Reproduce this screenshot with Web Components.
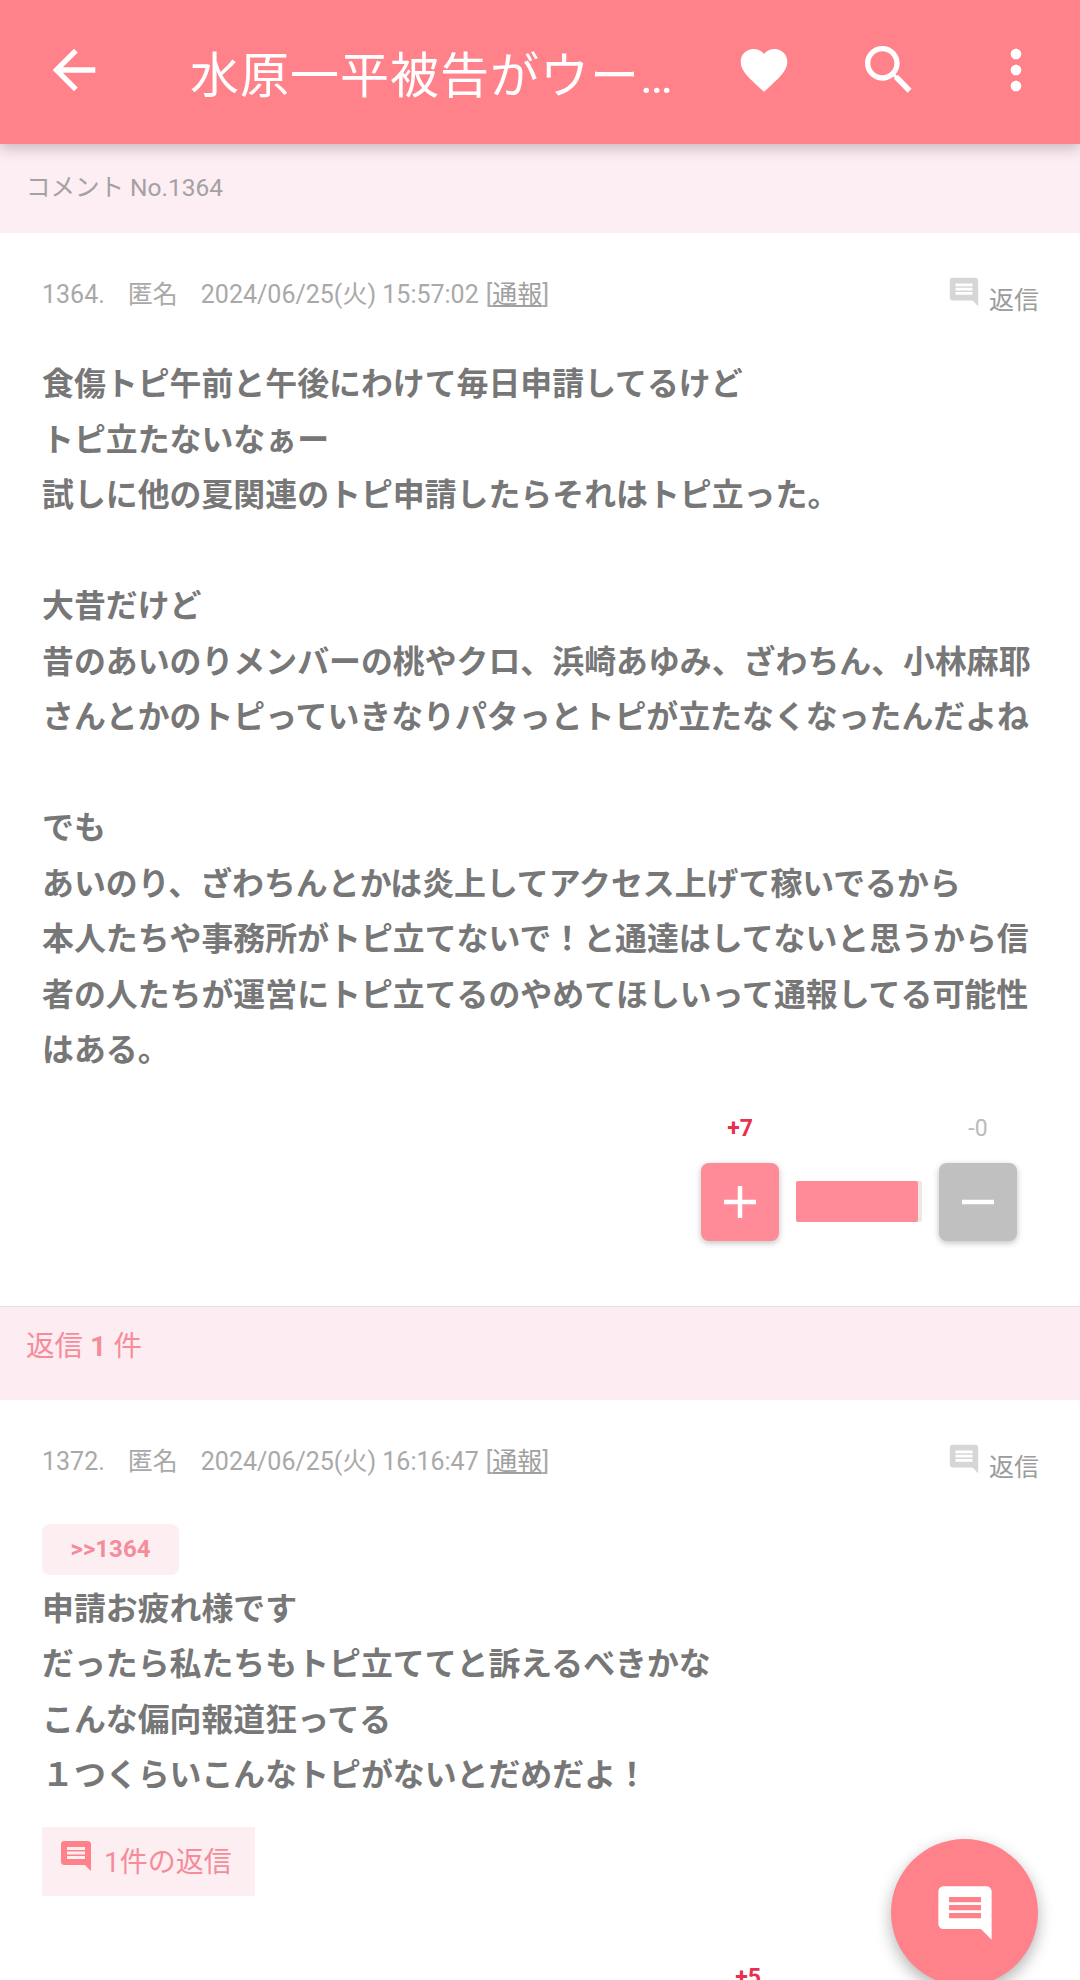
<!DOCTYPE html>
<html lang="ja">
<head>
<meta charset="utf-8">
<title>コメント</title>
<style>
  html, body { margin: 0; height: 1980px; overflow: hidden; background: #fff; }
  body { font-family: Roboto, "Noto Sans CJK JP", sans-serif; position: relative; }
</style>
</head>
<body>
<app-bar title-text="水原一平被告がウー…"></app-bar>
<section-band>コメント No.1364</section-band>
<comment-card num="1364." date="2024/06/25(火) 15:57:02" plus="+7" minus="-0">食傷トピ午前と午後にわけて毎日申請してるけど
トピ立たないなぁー
試しに他の夏関連のトピ申請したらそれはトピ立った。

大昔だけど
昔のあいのりメンバーの桃やクロ、浜崎あゆみ、ざわちん、小林麻耶
さんとかのトピっていきなりパタっとトピが立たなくなったんだよね

でも
あいのり、ざわちんとかは炎上してアクセス上げて稼いでるから
本人たちや事務所がトピ立てないで！と通達はしてないと思うから信
者の人たちが運営にトピ立てるのやめてほしいって通報してる可能性
はある。</comment-card>
<section-band tone="reply">返信 <b>1</b> 件</section-band>
<comment-card num="1372." date="2024/06/25(火) 16:16:47" anchor="&gt;&gt;1364" replies="1件の返信" plus="+5" minus="-0">申請お疲れ様です
だったら私たちもトピ立ててと訴えるべきかな
こんな偏向報道狂ってる
１つくらいこんなトピがないとだめだよ！</comment-card>
<reply-fab></reply-fab>

<script>
const MESSAGE_PATH = "M20 2H4c-1.1 0-2 .9-2 2v12c0 1.1.9 2 2 2h14l4 4V4c0-1.1-.9-2-2-2zm-2 12H6v-2h12v2zm0-3H6V9h12v2zm0-3H6V6h12v2z";

class AppBar extends HTMLElement {
  constructor() {
    super();
    this.attachShadow({ mode: "open" });
    this.shadowRoot.innerHTML = `
      <style>
        :host {
          display: flex;
          align-items: center;
          height: 144px;
          background: #ff8189;
          box-shadow: 0 3px 14px rgba(90,60,60,.35);
          position: relative;
          z-index: 2;
          color: #fff;
        }
        svg { fill: #fff; display: block; flex: none; margin-top: -4px; }
        .back { margin-left: 42px; }
        .title {
          flex: 1;
          margin-left: 84px;
          font-size: 49px;
          white-space: nowrap;
          overflow: hidden;
          letter-spacing: 1px;
          margin-top: -1px;
        }
        .heart { margin-right: 65px; }
        .search { margin-right: 63px; }
        .more { margin-right: 32px; }
      </style>
      <svg class="back" width="64" height="64" viewBox="0 0 24 24"><path d="M20 11H7.83l5.59-5.59L12 4l-8 8 8 8 1.41-1.41L7.83 13H20v-2z"/></svg>
      <div class="title"></div>
      <svg class="heart" width="56" height="56" viewBox="0 0 24 24"><path d="M12 21.35l-1.45-1.32C5.4 15.36 2 12.28 2 8.5 2 5.42 4.42 3 7.5 3c1.74 0 3.41.81 4.5 2.09C13.09 3.81 14.76 3 16.5 3 19.58 3 22 5.42 22 8.5c0 3.78-3.4 6.86-8.55 11.54L12 21.35z"/></svg>
      <svg class="search" width="64" height="64" viewBox="0 0 24 24"><path d="M15.5 14h-.79l-.28-.27C15.41 12.59 16 11.11 16 9.5 16 5.91 13.09 3 9.5 3S3 5.91 3 9.5 5.91 16 9.5 16c1.61 0 3.09-.59 4.23-1.57l.27.28v.79l5 4.99L20.49 19l-4.99-5zm-6 0C7.01 14 5 11.99 5 9.5S7.01 5 9.5 5 14 7.01 14 9.5 11.99 14 9.5 14z"/></svg>
      <svg class="more" width="64" height="64" viewBox="0 0 24 24"><path d="M12 8c1.1 0 2-.9 2-2s-.9-2-2-2-2 .9-2 2 .9 2 2 2zm0 2c-1.1 0-2 .9-2 2s.9 2 2 2 2-.9 2-2-.9-2-2-2zm0 6c-1.1 0-2 .9-2 2s.9 2 2 2 2-.9 2-2-.9-2-2-2z"/></svg>
    `;
    this.shadowRoot.querySelector(".title").textContent = this.getAttribute("title-text");
  }
}

class SectionBand extends HTMLElement {
  constructor() {
    super();
    this.attachShadow({ mode: "open" });
    this.shadowRoot.innerHTML = `
      <style>
        :host {
          display: block;
          height: 89px;
          box-sizing: border-box;
          padding: 28px 0 0 26px;
          line-height: 32px;
          background: #fceef3;
          color: #a5a0a3;
          font-size: 24.5px;
        }
        :host([tone="reply"]) {
          height: 94px;
          padding-top: 21px;
          line-height: 38px;
          border-top: 1px solid #e6dfe3;
          background: #fdedf2;
          color: #f58c9b;
          font-size: 28.5px;
        }
      </style>
      <slot></slot>
    `;
  }
}

class VoteBar extends HTMLElement {
  constructor() {
    super();
    this.attachShadow({ mode: "open" });
    this.shadowRoot.innerHTML = `
      <style>
        :host {
          display: grid;
          grid-template-columns: 78px 124px 78px;
          column-gap: 18px;
          justify-content: end;
          justify-items: center;
          align-items: center;
          row-gap: 21px;
          font-size: 23px;
        }
        .plus { color: #e8304f; font-weight: 700; }
        .minus { color: #bbb; }
        .btn {
          width: 78px;
          height: 78px;
          border-radius: 8px;
          display: flex;
          align-items: center;
          justify-content: center;
          box-shadow: 0 2px 6px rgba(0,0,0,.25);
        }
        .btn.up { background: #ff8b99; }
        .btn.down { background: #c0c0c0; }
        .bar {
          justify-self: start;
          margin-left: -1px;
          width: 122px;
          height: 41px;
          background: #ff8b99;
          box-shadow: 4px 0 0 #efe6e8;
          border-radius: 2px;
        }
        svg { display: block; fill: #fff; }
      </style>
      <div class="plus"></div>
      <div></div>
      <div class="minus"></div>
      <div class="btn up"><svg width="36" height="36" viewBox="0 0 36 36"><path d="M15.750 2h4.500v13.750H34v4.500H20.250V34h-4.500V20.250H2v-4.500h13.750z"/></svg></div>
      <div class="bar"></div>
      <div class="btn down"><svg width="36" height="36" viewBox="0 0 36 36"><path d="M2 15.750h32v4.500H2z"/></svg></div>
    `;
  }

  set counts([plus, minus]) {
    this.shadowRoot.querySelector(".plus").textContent = plus;
    this.shadowRoot.querySelector(".minus").textContent = minus;
  }
}

class CommentCard extends HTMLElement {
  constructor() {
    super();
    this.attachShadow({ mode: "open" });
    this.shadowRoot.innerHTML = `
      <style>
        :host {
          display: block;
          padding: 43px 41px 65px 42px;
          background: #fff;
          font-family: Roboto, "Noto Sans CJK JP", sans-serif;
        }
        .meta {
          display: flex;
          align-items: flex-start;
          color: #a9a9a9;
          font-size: 25px;
          line-height: 38px;
          white-space: nowrap;
        }
        .meta span { margin-right: 23px; }
        .meta .date { margin-right: 7px; }
        .meta u { color: #a0a0a0; }
        .reply {
          margin-left: auto;
          display: flex;
          align-items: center;
          gap: 8px;
          color: #9c9c9c;
          height: 38px;
        }
        .reply svg { fill: #d6d6d6; margin-top: -6px; }
        .reply b { font-weight: 400; margin-top: 12px; }
        .anchor {
          display: none;
          width: 137px;
          height: 51px;
          margin-top: 43px;
          border-radius: 8px;
          background: #fdeef1;
          color: #f58c9b;
          font-size: 24px;
          font-weight: 700;
          line-height: 51px;
          text-align: center;
        }
        .body {
          margin-top: 40px;
          color: #777;
          font-size: 31.9px;
          font-weight: 700;
          line-height: 55.5px;
          white-space: pre-line;
          font-family: "Noto Sans CJK JP", sans-serif;
        }
        .replies {
          display: none;
          align-items: center;
          gap: 10px;
          width: 213px;
          height: 69px;
          margin-top: 26px;
          box-sizing: border-box;
          padding-left: 16px;
          background: #fdeef1;
          color: #f58c9b;
          font-size: 28px;
        }
        .replies svg { fill: #ff8189; margin-top: -10px; }
        .replies span { margin-top: -3px; }
        vote-bar { margin: 39px 22px 0 0; }
        :host([anchor]) .anchor { display: block; }
        :host([anchor]) .body { margin-top: 4px; }
        :host([replies]) .replies { display: flex; }
        :host([replies]) vote-bar { margin: 68px 14px 0 0; }
      </style>
      <div class="meta">
        <span class="num"></span><span>匿名</span><span class="date"></span><span>[<u>通報</u>]</span>
        <div class="reply">
          <svg width="34" height="34" viewBox="0 0 24 24"><path d="${MESSAGE_PATH}"/></svg>
          <b>返信</b>
        </div>
      </div>
      <div class="anchor"></div>
      <div class="body"><slot></slot></div>
      <div class="replies">
        <svg width="36" height="36" viewBox="0 0 24 24"><path d="${MESSAGE_PATH}"/></svg>
        <span class="count"></span>
      </div>
      <vote-bar></vote-bar>
    `;
  }

  connectedCallback() {
    const root = this.shadowRoot;
    root.querySelector(".num").textContent = this.getAttribute("num");
    root.querySelector(".date").textContent = this.getAttribute("date");
    root.querySelector(".anchor").textContent = this.getAttribute("anchor");
    root.querySelector(".count").textContent = this.getAttribute("replies");
    root.querySelector("vote-bar").counts = [this.getAttribute("plus"), this.getAttribute("minus")];
  }
}

class ReplyFab extends HTMLElement {
  constructor() {
    super();
    this.attachShadow({ mode: "open" });
    this.shadowRoot.innerHTML = `
      <style>
        :host {
          position: absolute;
          left: 891px;
          top: 1839px;
          width: 147px;
          height: 147px;
          border-radius: 50%;
          background: #ff8189;
          box-shadow: 0 6px 16px rgba(0,0,0,.3);
          display: flex;
          align-items: center;
          justify-content: center;
        }
        svg { fill: #fff; display: block; }
      </style>
      <svg width="64" height="64" viewBox="0 0 24 24"><path d="${MESSAGE_PATH}"/></svg>
    `;
  }
}

// vote-bar first: comment-card sets its counts from connectedCallback
customElements.define("app-bar", AppBar);
customElements.define("section-band", SectionBand);
customElements.define("vote-bar", VoteBar);
customElements.define("comment-card", CommentCard);
customElements.define("reply-fab", ReplyFab);
</script>
</body>
</html>
